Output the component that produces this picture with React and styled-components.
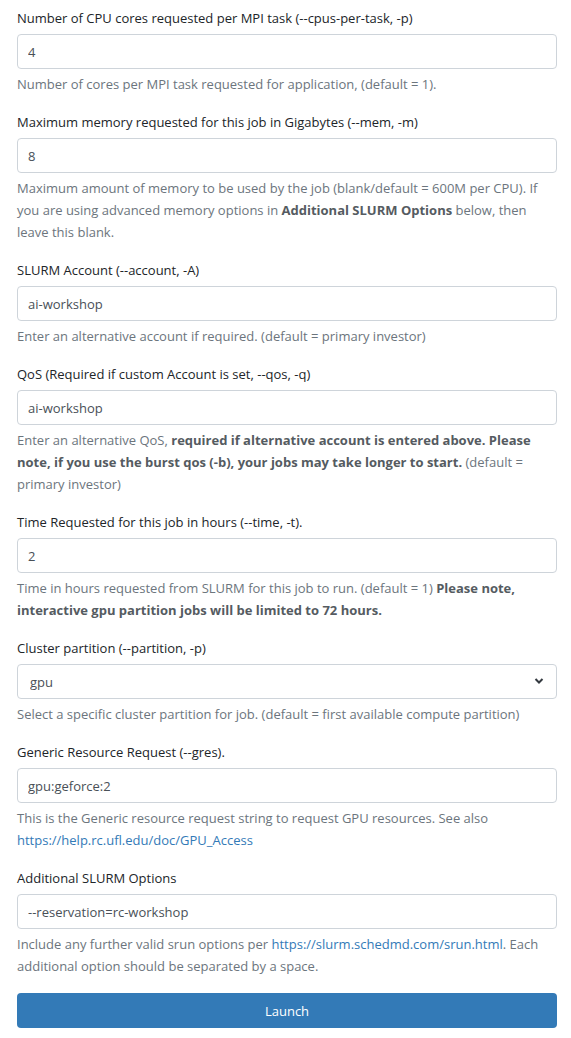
import React from "react";
import styled, { createGlobalStyle } from "styled-components";

const GlobalStyle = createGlobalStyle`
  body {
    margin: 0;
    background: #fff;
    font-family: "Open Sans", "Noto Sans", sans-serif;
    font-size: 13px;
    line-height: 22px;
    color: #212529;
  }
`;

const Form = styled.form`
  padding: 7px 14px 8px 17px;
  display: flex;
  flex-direction: column;
  gap: 16px;
`;

const Group = styled.div`
  display: flex;
  flex-direction: column;
`;

const Label = styled.label`
  color: #212529;
  margin-bottom: 5px;
`;

const Input = styled.input`
  box-sizing: border-box;
  height: 35px;
  width: 100%;
  padding: 0 10px;
  border: 1px solid #ced4da;
  border-radius: 4px;
  font: inherit;
  color: #495057;
  background: #fff;
`;

const SelectBox = styled.div`
  position: relative;
  select {
    appearance: none;
    box-sizing: border-box;
    height: 35px;
    width: 100%;
    padding: 0 12px;
    border: 1px solid #ced4da;
    border-radius: 4px;
    font: inherit;
    color: #495057;
    background: #fff;
  }
  svg {
    position: absolute;
    right: 13px;
    top: 13px;
    pointer-events: none;
  }
`;

const Help = styled.small`
  display: block;
  margin-top: 4px;
  font-size: 13px;
  color: #6c757d;
  b {
    font-weight: 700;
    color: #555b61;
  }
  a {
    color: #337ab7;
    text-decoration: none;
  }
`;

const Button = styled.button`
  height: 35px;
  border: none;
  border-radius: 4px;
  background: #337ab7;
  color: #fff;
  font: inherit;
`;

const Field = ({ label, value, children }) => (
  <Group>
    <Label>{label}</Label>
    <Input defaultValue={value} />
    <Help>{children}</Help>
  </Group>
);

export default function App() {
  return (
    <>
      <GlobalStyle />
      <Form onSubmit={(e) => e.preventDefault()}>
        <Field label="Number of CPU cores requested per MPI task (--cpus-per-task, -p)" value="4">
          Number of cores per MPI task requested for application, (default = 1).
        </Field>
        <Field label="Maximum memory requested for this job in Gigabytes (--mem, -m)" value="8">
          Maximum amount of memory to be used by the job (blank/default = 600M per CPU). If
          you are using advanced memory options in <b>Additional SLURM Options</b> below, then
          leave this blank.
        </Field>
        <Field label="SLURM Account (--account, -A)" value="ai-workshop">
          Enter an alternative account if required. (default = primary investor)
        </Field>
        <Field label="QoS (Required if custom Account is set, --qos, -q)" value="ai-workshop">
          Enter an alternative QoS, <b>required if alternative account is entered above. Please
          note, if you use the burst qos (-b), your jobs may take longer to start.</b> (default =
          primary investor)
        </Field>
        <Field label="Time Requested for this job in hours (--time, -t)." value="2">
          Time in hours requested from SLURM for this job to run. (default = 1) <b>Please note,
          interactive gpu partition jobs will be limited to 72 hours.</b>
        </Field>
        <Group>
          <Label>Cluster partition (--partition, -p)</Label>
          <SelectBox>
            <select defaultValue="gpu">
              <option value="gpu">gpu</option>
            </select>
            <svg width="10" height="8" viewBox="0 0 10 8">
              <path d="M1.5 2 L5 5.5 L8.5 2" fill="none" stroke="#343a40" strokeWidth="2" />
            </svg>
          </SelectBox>
          <Help>Select a specific cluster partition for job. (default = first available compute partition)</Help>
        </Group>
        <Field label="Generic Resource Request (--gres)." value="gpu:geforce:2">
          This is the Generic resource request string to request GPU resources. See also{" "}
          <a href="#">https://help.rc.ufl.edu/doc/GPU_Access</a>
        </Field>
        <Field label="Additional SLURM Options" value="--reservation=rc-workshop">
          Include any further valid srun options per{" "}
          <a href="#">https://slurm.schedmd.com/srun.html</a>. Each additional option should
          be separated by a space.
        </Field>
        <Button type="submit">Launch</Button>
      </Form>
    </>
  );
}
